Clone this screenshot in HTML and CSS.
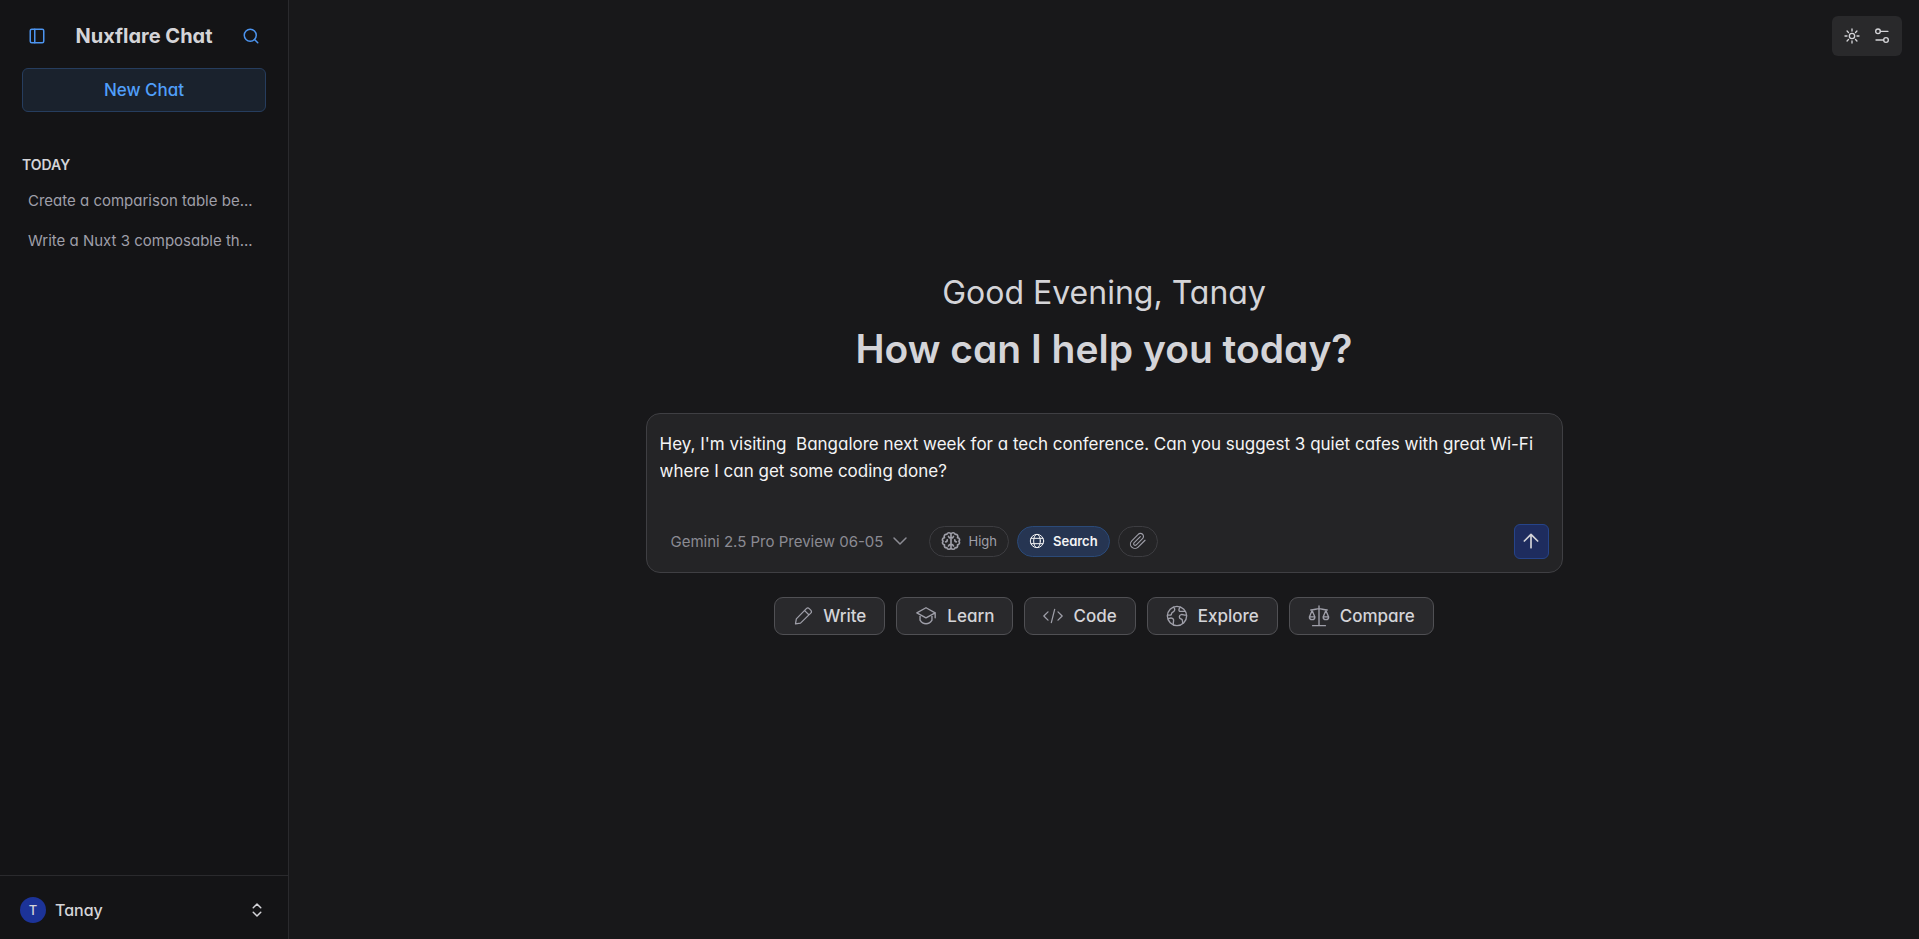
FILE: index.html
```html
<!DOCTYPE html>
<html lang="en">
<head>
  <meta charset="UTF-8" />
  <meta name="viewport" content="width=device-width, initial-scale=1.0"/>
  <title>Nuxflare Chat</title>
  <link rel="stylesheet" href="styles.css">
</head>
<body>
<div class="app">
  <aside class="sidebar">
    <div class="sidebar-top">
      <div class="brand">
        <button class="icon-btn" aria-label="Toggle sidebar">
          <svg width="18" height="18" viewBox="0 0 24 24"><rect x="3" y="3" width="18" height="18" rx="2"/><path d="M9 3v18"/></svg>
        </button>
        <h1>Nuxflare Chat</h1>
        <button class="icon-btn" aria-label="Search chats">
          <svg width="18" height="18" viewBox="0 0 24 24"><circle cx="11" cy="11" r="8"/><path d="m21 21-4.3-4.3"/></svg>
        </button>
      </div>
      <button class="new-chat">New Chat</button>
    </div>

    <nav class="history">
      <h2>TODAY</h2>
      <a href="#">Create a comparison table be...</a>
      <a href="#">Write a Nuxt 3 composable th...</a>
    </nav>

    <button class="user">
      <span class="avatar">T</span>
      <span class="user-name">Tanay</span>
      <svg width="18" height="18" viewBox="0 0 24 24"><path d="m7 15 5 5 5-5M7 9l5-5 5 5"/></svg>
    </button>
  </aside>

  <main class="main">
    <div class="tools">
      <button aria-label="Toggle theme">
        <svg width="16" height="16" viewBox="0 0 24 24"><circle cx="12" cy="12" r="4"/><path d="M12 1.5v3M12 19.5v3M4.6 4.6l2.1 2.1M17.3 17.3l2.1 2.1M1.5 12h3M19.5 12h3M6.7 17.3l-2.1 2.1M19.4 4.6l-2.1 2.1"/></svg>
      </button>
      <button aria-label="Settings">
        <svg width="16" height="16" viewBox="0 0 24 24"><circle cx="6" cy="5" r="3.5"/><circle cx="18" cy="18" r="3.5"/><path d="M9.5 5H21M3 18h11.5"/></svg>
      </button>
    </div>

    <div class="welcome">
      <p class="greeting">Good Evening, Tanay</p>
      <h2 class="question">How can I help you today?</h2>

      <form class="composer">
        <textarea aria-label="Message" rows="2" spellcheck="false">Hey, I'm visiting  Bangalore next week for a tech conference. Can you suggest 3 quiet cafes with great Wi-Fi where I can get some coding done?</textarea>
        <div class="composer-bar">
          <label class="model">
            <select aria-label="Model">
              <option>Gemini 2.5 Pro Preview 06-05</option>
            </select>
            <svg width="18" height="18" viewBox="0 0 24 24"><path d="m4 8 8 8 8-8"/></svg>
          </label>
          <button type="button" class="pill effort">
            <svg width="20" height="20" viewBox="0 0 24 24"><path d="M12 3.5C11 1.500 7.500 1.500 7 4 4.500 3.500 3 6 4.200 8 1.500 8.500 1 11 2.500 12.200 1 14 2 16.500 4.200 16.500 3.500 19 5 20.500 7 20c.5 2.500 4 2.500 5 .5M12 3.500c1-2 4.500-2 5 .5 2.500-.5 4 2 2.800 4 2.700.5 3.200 3 1.700 4.200 1.500 1.800.5 4.300-1.700 4.300.700 2.500-.8 4-2.800 3.500-.5 2.500-4 2.500-5 .5M12 3.500v17M12 8.500c-1.500 0-2.500-.5-3-2M12 8.500c1.500 0 2.500-.5 3-2M12 16c-1.500 0-2.500.5-3 2M12 16c1.500 0 2.500.5 3 2M7.500 10.500c0 2-1 2.500-2 2.500M16.500 10.500c0 2 1 2.500 2 2.500"/></svg>
            High
          </button>
          <button type="button" class="pill active">
            <svg width="16" height="16" viewBox="0 0 24 24"><circle cx="12" cy="12" r="10"/><ellipse cx="12" cy="12" rx="5" ry="10"/><path d="M3 8h18M3 16h18"/></svg>
            Search
          </button>
          <button type="button" class="pill attach" aria-label="Attach file">
            <svg width="18" height="18" viewBox="0 0 24 24"><path d="m21.4 11-9.200 9.200a6 6 0 0 1-8.500-8.500l8.600-8.500A4 4 0 1 1 18 8.800l-8.600 8.600a2 2 0 0 1-2.800-2.800l8.500-8.500"/></svg>
          </button>
          <button type="submit" class="send" aria-label="Send">
            <svg width="20" height="20" viewBox="0 0 24 24"><path d="M12 20V4M4 12l8-8 8 8"/></svg>
          </button>
        </div>
      </form>

      <div class="prompts">
        <button>
          <svg width="20" height="20" viewBox="0 0 24 24"><path d="M3 21.5 4 15.5 16 3.2a2.500 2.500 0 0 1 3.500 0l1.800 1.800a2.500 2.500 0 0 1 0 3.500L9 20.500zM14 5.500l5 5"/></svg>
          Write
        </button>
        <button>
          <svg width="22" height="22" viewBox="0 0 24 24"><path d="M2 8.500 12 3l10 5.500L12 14zM5.500 10.500v6C7 19 9.500 20.500 12 20.500s5-1.500 6.500-4v-6M22 8.500V14"/></svg>
          Learn
        </button>
        <button>
          <svg width="20" height="20" viewBox="0 0 24 24"><path d="m6 7-5 5 5 5M18 7l5 5-5 5M14 4l-4 16"/></svg>
          Code
        </button>
        <button>
          <svg width="22" height="22" viewBox="0 0 24 24"><circle cx="12" cy="12" r="10.500"/><path d="M8 2.500c1.500 1 2 2.500 1 4S6 7.500 6 9.500s-1.500 1.500-4.500 1.500M2.500 15c2-1 4.500-1 5.500.5s-.5 3 0 6M15.500 2.500C14 4 13.500 6 15 7h6M22.500 11c-3 .5-3.500-1-6-.5s-2.500 4-.5 4.500 2 1 2 2.500.5 2.500.5 2.500"/></svg>
          Explore
        </button>
        <button>
          <svg width="22" height="22" viewBox="0 0 24 24"><path d="M12 1v21M5 22.500h14M3 5.500c4 0 6-1.500 9-1.500s5 1.500 9 1.500M4.500 6l-3 7h6zM19.500 6l-3 7h6zM1.500 13a3 3 0 0 0 6 0M16.500 13a3 3 0 0 0 6 0"/></svg>
          Compare
        </button>
      </div>
    </div>
  </main>
</div>
</body>
</html>
```
FILE: styles.css
```css
* {
  box-sizing: border-box;
}

body {
  margin: 0;
  background: #18181a;
  color: #d4d4d8;
  font-family: Inter, "Liberation Sans", sans-serif;
  font-feature-settings: "cv11";
  font-size: 16px;
}

button, select, textarea {
  font: inherit;
  font-feature-settings: inherit;
  color: inherit;
  background: none;
  border: none;
  margin: 0;
  padding: 0;
}

button {
  cursor: pointer;
}

svg {
  display: block;
  flex: none;
  fill: none;
  stroke: currentColor;
  stroke-width: 1.5;
  stroke-linecap: round;
  stroke-linejoin: round;
}

.app {
  display: flex;
  min-height: 100vh;
}

/* sidebar */
.sidebar {
  display: flex;
  flex-direction: column;
  width: 289px;
  flex: none;
  background: #141416;
  border-right: 1px solid #2a2a2d;
}

.sidebar-top {
  padding: 20px 22px 0;
}

.brand {
  display: flex;
  align-items: center;
  justify-content: space-between;
  padding: 0 6px;
  margin-bottom: 16px;
}

.brand h1 {
  margin: 0;
  font-size: 20px;
  line-height: 32px;
  font-weight: 700;
}

.icon-btn {
  color: #4c94ef;
}

.icon-btn svg {
  stroke-width: 2;
}

.new-chat {
  width: 100%;
  height: 44px;
  border: 1px solid #263d5e;
  border-radius: 6px;
  background: #1a222d;
  color: #509ffa;
  font-size: 17px;
  font-weight: 500;
}

.history {
  flex: 1;
  padding: 41px 22px 0;
}

.history h2 {
  margin: 0 0 4px;
  font-size: 14px;
  line-height: 24px;
  font-weight: 600;
}

.history a {
  display: block;
  padding: 0 6px;
  font-size: 15px;
  line-height: 40px;
  color: #9f9fa9;
  text-decoration: none;
  white-space: nowrap;
}

.user {
  display: flex;
  align-items: center;
  gap: 9px;
  height: 64px;
  padding: 4px 22px 0 20px;
  border-top: 1px solid #2a2a2d;
  font-weight: 500;
  text-align: left;
}

.user-name {
  flex: 1;
}

.user svg {
  stroke-width: 2;
}

.avatar {
  width: 26px;
  border-radius: 50%;
  background: #1c3398;
  font-size: 13px;
  line-height: 26px;
  text-align: center;
}

/* main */
.main {
  position: relative;
  flex: 1;
  display: flex;
  flex-direction: column;
  align-items: center;
  justify-content: center;
  padding: 0 24px 36px;
}

.tools {
  position: absolute;
  top: 16px;
  right: 17px;
  display: flex;
  gap: 14px;
  padding: 12px;
  border-radius: 6px;
  background: #29292b;
}

.tools svg {
  stroke-width: 2;
}

.welcome {
  width: 100%;
  max-width: 917px;
}

.greeting {
  margin: 0;
  font-size: 32px;
  line-height: 48px;
  text-align: center;
}

.question {
  margin: 8px 0 40px;
  font-size: 39px;
  line-height: 48px;
  font-weight: 600;
  text-align: center;
}

.composer {
  padding: 17px 13px 13px;
  border: 1px solid #3f3f43;
  border-radius: 14px;
  background: #242426;
}

.composer textarea {
  display: block;
  width: 100%;
  height: 80px;
  margin-bottom: 13px;
  color: #f4f4f5;
  font-size: 17px;
  line-height: 27px;
  resize: none;
  outline: none;
}

.composer-bar {
  display: flex;
  align-items: center;
  gap: 8px;
}

.model {
  display: flex;
  align-items: center;
  gap: 7px;
  margin: 0 12px 0 11px;
  color: #8b8b93;
  font-size: 15px;
}

.model select {
  appearance: none;
}

.model svg {
  stroke-width: 2;
}

.pill {
  display: flex;
  align-items: center;
  gap: 8px;
  height: 31px;
  padding: 0 11px;
  border: 1px solid #3d3d41;
  border-radius: 16px;
  color: #9f9fa9;
  font-size: 13px;
}

.pill.effort svg {
  stroke-width: 2;
}

.pill.active {
  border-color: #2b4a78;
  background: #263552;
  color: #f4f4f5;
  font-weight: 600;
}

.pill.attach {
  padding: 0 10px;
}

.send {
  display: flex;
  align-items: center;
  justify-content: center;
  width: 35px;
  height: 35px;
  margin-left: auto;
  border: 1px solid #26448a;
  border-radius: 6px;
  background: #1e2c5e;
}

.send svg {
  stroke-width: 2;
}

.prompts {
  display: flex;
  flex-wrap: wrap;
  justify-content: center;
  gap: 11px;
  margin-top: 24px;
}

.prompts button {
  display: flex;
  align-items: center;
  gap: 10px;
  height: 38px;
  padding: 0 18px;
  border: 1px solid #505054;
  border-radius: 9px;
  background: #29292c;
  font-size: 17px;
  font-weight: 500;
}

.prompts svg {
  color: #9f9fa9;
}

@media (max-width: 800px) {
  .sidebar {
    display: none;
  }
}
```
